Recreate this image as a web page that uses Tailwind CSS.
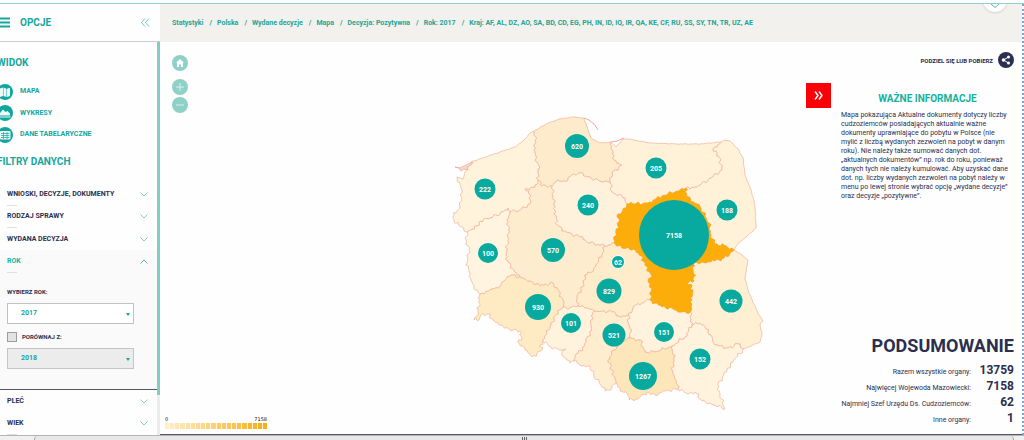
<!DOCTYPE html>
<html lang="pl">
  <head>
    <meta charset="UTF-8" />
    <meta name="viewport" content="width=device-width, initial-scale=1.0" />
    <title>Mapy migracyjne - statystyki</title>
    <script src="https://cdn.jsdelivr.net/npm/@tailwindcss/browser@4"></script>
  </head>
  <body class="h-screen flex flex-col overflow-hidden bg-[#fefefe] font-[Roboto,sans-serif] text-[#2b2f4e]">
    <div class="h-[4px] shrink-0 border-b border-[#8fd0cb]"></div>

    <div class="flex flex-1 min-h-0 border-r-2 border-dotted border-[#7fa3d6]">
      <!-- Sidebar -->
      <aside class="w-[160px] shrink-0 flex flex-col">
        <div class="h-[38px] shrink-0 flex items-center border-b border-[#c9cccc] pr-2.5 text-[#14a79d]">
          <button aria-label="Menu" class="w-[10px]">
            <svg class="w-[10px] h-[11px]" viewBox="0 0 10 11" stroke="currentColor" stroke-width="2">
              <path d="M0 1.5h10M0 5.5h10M0 9.5h10" />
            </svg>
          </button>
          <h1 class="ml-2.5 flex-1 text-[10px] font-bold">OPCJE</h1>
          <button aria-label="Zwiń">
            <svg class="w-[9px] h-[9px]" viewBox="0 0 9 9" fill="none" stroke="#4fbdb4" stroke-width="0.8">
              <path d="M4 .5l-3.500 4 3.500 4M8 .5l-3.500 4 3.500 4" />
            </svg>
          </button>
        </div>

        <div class="flex-1 min-h-0 flex justify-between">
          <div class="flex-1 flex flex-col overflow-hidden">
            <section class="pt-3.5 text-[#14a79d]">
              <h2 class="-ml-[3px] text-[10px] leading-[14px] font-bold">WIDOK</h2>
              <ul class="mt-[11px] text-[7px] font-bold">
                <li>
                  <a href="#mapa" class="h-[21px] flex items-center">
                    <svg class="w-[16px] h-[16px] -ml-[3px]" viewBox="0 0 16 16">
                      <circle cx="8" cy="8" r="8" fill="#0fa79d" />
                      <path d="M3 4.500l3-1v8.500l-3 1zM6.500 3.500l3 1.300v8.300l-3-1.200zM10 4.800l3-1v8.200l-3 1z" fill="#eefaf9" />
                    </svg>
                    <span class="ml-[7px]">MAPA</span>
                  </a>
                </li>
                <li>
                  <a href="#wykresy" class="h-[22px] flex items-center">
                    <svg class="w-[16px] h-[16px] -ml-[3px]" viewBox="0 0 16 16">
                      <circle cx="8" cy="8" r="8" fill="#0fa79d" />
                      <path d="M3 10.500V8l3-3.500 2.500 2.500 2-1 2.500 2.500v2zM3 11.500h10.500v1H3z" fill="#eefaf9" />
                    </svg>
                    <span class="ml-[7px]">WYKRESY</span>
                  </a>
                </li>
                <li>
                  <a href="#dane" class="h-[21px] flex items-center">
                    <svg class="w-[16px] h-[16px] -ml-[3px]" viewBox="0 0 16 16">
                      <circle cx="8" cy="8" r="8" fill="#0fa79d" />
                      <rect x="3" y="4" width="10.500" height="8.500" rx="1" fill="#eefaf9" />
                      <path d="M4 6.500h8.500M4 8.500h8.500M4 10.500h8.500M6.500 5v7M10 5v7" stroke="#0fa79d" stroke-width=".7" />
                    </svg>
                    <span class="ml-[7px]">DANE TABELARYCZNE</span>
                  </a>
                </li>
              </ul>
            </section>

            <section class="pt-2.5">
              <h2 class="-ml-[3px] text-[10px] leading-[14px] font-bold text-[#14a79d]">FILTRY DANYCH</h2>
              <div class="mt-[15px] text-[7px] font-bold">
                <button class="w-full h-[21px] pl-[7px] pr-[9px] flex items-center justify-between">
                  WNIOSKI, DECYZJE, DOKUMENTY
                  <svg class="w-[8px] h-[5px]" viewBox="0 0 8 5" fill="none" stroke="#8accc5"><path d="M.5 .5l3.500 3.500 3.500-3.500" /></svg>
                </button>
                <div class="w-[10px] h-px ml-[7px] bg-[#dfe1e1]"></div>
                <button class="w-full h-[21px] pl-[7px] pr-[9px] flex items-center justify-between">
                  RODZAJ SPRAWY
                  <svg class="w-[8px] h-[5px]" viewBox="0 0 8 5" fill="none" stroke="#8accc5"><path d="M.5 .5l3.500 3.500 3.500-3.500" /></svg>
                </button>
                <div class="w-[10px] h-px ml-[7px] bg-[#dfe1e1]"></div>
                <button class="w-full h-[22px] pl-[7px] pr-[9px] flex items-center justify-between">
                  WYDANA DECYZJA
                  <svg class="w-[8px] h-[5px]" viewBox="0 0 8 5" fill="none" stroke="#8accc5"><path d="M.5 .5l3.500 3.500 3.500-3.500" /></svg>
                </button>
              </div>
            </section>

            <section class="h-[140px] shrink-0 bg-[#fafafa] border-b border-[#55576b] text-[7px] font-bold">
              <button class="w-full h-[22px] pl-[7px] pr-[9px] flex items-center justify-between text-[#14b39f]">
                ROK
                <svg class="w-[8px] h-[5px]" viewBox="0 0 8 5" fill="none" stroke="#4fb9a9"><path d="M.5 4.500l3.500-3.500 3.500 3.500" /></svg>
              </button>
              <div class="w-[10px] h-px ml-[7px] bg-[#dfe1e1]"></div>
              <div class="pl-[7px] pt-3.5 w-[134px] text-[6px]">
                <label for="rok" class="block leading-[10px]">WYBIERZ ROK:</label>
                <div class="mt-1.5 relative">
                  <select id="rok" class="appearance-none block w-full h-[21px] pl-[13px] border border-[#bfc1c2] bg-white text-[7px] font-bold text-[#14a79d]">
                    <option>2017</option>
                  </select>
                  <svg class="absolute right-1 top-2.5 w-[4px] h-[3px]" viewBox="0 0 4 3"><path d="M0 0h4l-2 3z" fill="#14a79d" /></svg>
                </div>
                <div class="mt-2 flex items-center">
                  <input id="porownaj" type="checkbox" class="appearance-none w-[10px] h-[10px] border border-[#9a9c9e] bg-[#e2e3e3]" />
                  <label for="porownaj" class="ml-[5px] leading-[10px]">PORÓWNAJ Z:</label>
                </div>
                <div class="mt-1.5 relative">
                  <select aria-label="Porównaj z rokiem" class="appearance-none block w-full h-[21px] pl-[13px] border border-[#c4c6c6] bg-[#ececec] text-[7px] font-bold text-[#14a79d]">
                    <option>2018</option>
                  </select>
                  <svg class="absolute right-1 top-2.5 w-[4px] h-[3px]" viewBox="0 0 4 3"><path d="M0 0h4l-2 3z" fill="#14a79d" /></svg>
                </div>
              </div>
            </section>

            <section class="text-[7px] font-bold">
              <button class="w-full h-[22px] pl-[7px] pr-[9px] flex items-center justify-between">
                PŁEĆ
                <svg class="w-[8px] h-[5px]" viewBox="0 0 8 5" fill="none" stroke="#8accc5"><path d="M.5 .5l3.500 3.500 3.500-3.500" /></svg>
              </button>
              <button class="w-full h-[22px] pl-[7px] pr-[9px] flex items-center justify-between">
                WIEK
                <svg class="w-[8px] h-[5px]" viewBox="0 0 8 5" fill="none" stroke="#8accc5"><path d="M.5 .5l3.500 3.500 3.500-3.500" /></svg>
              </button>
              <div class="w-[10px] h-px ml-[7px] bg-[#dfe1e1]"></div>
            </section>
          </div>
          <div class="w-[3px] bg-[#ececec]"><div class="h-[353px] bg-[#7fcdc3]"></div></div>
        </div>
      </aside>

      <!-- Map and summary -->
      <main class="flex-1 min-w-0 flex flex-col border-b border-[#55576b]">
        <header class="relative h-[38px] shrink-0 px-3 flex items-center bg-[#f2f1ed] overflow-hidden">
          <nav class="text-[7px] font-bold text-[#22a596] whitespace-nowrap flex gap-[5px]">
            <a href="#">Statystyki</a><span class="pl-px">/</span>
            <a href="#">Polska</a><span class="pl-px">/</span>
            <a href="#">Wydane decyzje</a><span class="pl-px">/</span>
            <a href="#">Mapa</a><span class="pl-px">/</span>
            <a href="#">Decyzja: Pozytywna</a><span class="pl-px">/</span>
            <a href="#">Rok: 2017</a><span class="pl-px">/</span>
            <a href="#">Kraj: AF, AL, DZ, AO, SA, BD, CD, EG, PH, IN, ID, IQ, IR, QA, KE, CF, RU, SS, SY, TN, TR, UZ, AE</a>
          </nav>
          <button aria-label="Rozwiń" class="absolute right-[15px] -top-4 w-[24px] h-[24px] rounded-full bg-white shadow flex items-end justify-center">
            <svg class="w-[8px] h-[8px]" viewBox="0 0 8 8" fill="none" stroke="#4fbdb4"><path d="M0 0l4 3.500L8 0" /></svg>
          </button>
        </header>

        <div class="flex-1 min-h-0 flex">
          <div class="w-[120px] shrink-0 pl-3 pt-[13px] pb-[5px] flex flex-col">
            <button aria-label="Cała mapa" class="w-[16px] h-[16px]">
              <svg viewBox="0 0 16 16"><circle cx="8" cy="8" r="8" fill="#8fd0c8" /><path d="M8 4l4 3.800h-1V12H9V9.500H7V12H5V7.800H4z" fill="#fff" /></svg>
            </button>
            <button aria-label="Przybliż" class="mt-2 w-[16px] h-[16px]">
              <svg viewBox="0 0 16 16"><circle cx="8" cy="8" r="8" fill="#8fd0c8" /><path d="M8 4v8M4 8h8" stroke="#d9f0ed" /></svg>
            </button>
            <button aria-label="Oddal" class="mt-[2px] w-[16px] h-[16px]">
              <svg viewBox="0 0 16 16"><circle cx="8" cy="8" r="8" fill="#8fd0c8" /><path d="M4 8h8" stroke="#d9f0ed" /></svg>
            </button>
            <div class="mt-auto -ml-[7px] w-[102px] text-[5px] text-[#111]">
              <div class="flex justify-between leading-[8px] font-[DejaVu_Sans,sans-serif]"><span>0</span><span>7158</span></div>
              <div id="scale" class="h-[6px] flex gap-px bg-[#fff6e2]"></div>
            </div>
          </div>

          <div class="flex-1 min-w-0 flex justify-center pt-[70px]">
            <svg id="map" class="w-[320px] h-[306px] shrink-0 ml-[134px]" viewBox="450 112 320 306" role="img" aria-label="Mapa Polski"></svg>
          </div>

          <div class="w-[216px] shrink-0 pt-2.5 pb-2 pr-2 flex flex-col">
            <button class="self-end flex items-center gap-[5px] text-[6px] font-bold">
              PODZIEL SIĘ LUB POBIERZ
              <svg class="w-[16px] h-[16px]" viewBox="0 0 16 16">
                <circle cx="8" cy="8" r="8" fill="#2b2f52" />
                <path d="M10.500 5L5.500 8l5 3" fill="none" stroke="#fff" />
                <g fill="#fff"><circle cx="10.500" cy="5" r="1.500" /><circle cx="5.500" cy="8" r="1.800" /><circle cx="10.500" cy="11" r="1.500" /></g>
              </svg>
            </button>
            <div class="mt-[15px] flex gap-[10px]">
              <button aria-label="Ukryj informacje" class="w-[25px] h-[25px] shrink-0 bg-[#fb0007] flex items-center justify-center">
                <svg class="w-[9px] h-[9px]" viewBox="0 0 9 9" fill="none" stroke="#fff" stroke-width="1.500"><path d="M1 .5l3 4-3 4M5 .5l3 4-3 4" /></svg>
              </button>
              <div class="flex-1 min-w-0 pt-[9px]">
                <h2 class="text-center text-[10px] leading-[14px] font-bold text-[#14b1a0]">WAŻNE INFORMACJE</h2>
                <p class="mt-[5px] text-[7px] leading-[9px] whitespace-nowrap">
                  Mapa pokazująca Aktualne dokumenty dotyczy liczby<br />
                  cudzoziemców posiadających aktualnie ważne<br />
                  dokumenty uprawniające do pobytu w Polsce (nie<br />
                  mylić z liczbą wydanych zezwoleń na pobyt w danym<br />
                  roku). Nie należy także sumować danych dot.<br />
                  „aktualnych dokumentów” np. rok do roku, ponieważ<br />
                  danych tych nie należy kumulować. Aby uzyskać dane<br />
                  dot. np. liczby wydanych zezwoleń na pobyt należy w<br />
                  menu po lewej stronie wybrać opcję „wydane decyzje”<br />
                  oraz decyzje „pozytywne”.
                </p>
              </div>
            </div>
            <div class="mt-auto text-right">
              <h2 class="text-[18px] leading-[24px] font-bold">PODSUMOWANIE</h2>
              <dl class="mt-1 grid grid-cols-[1fr_43px] auto-rows-[16px] items-baseline text-[7px] whitespace-nowrap">
                <dt>Razem wszystkie organy:</dt><dd class="text-[12px] leading-[16px] font-bold">13759</dd>
                <dt>Najwięcej Wojewoda Mazowiecki:</dt><dd class="text-[12px] leading-[16px] font-bold">7158</dd>
                <dt>Najmniej Szef Urzędu Ds. Cudzoziemców:</dt><dd class="text-[12px] leading-[16px] font-bold">62</dd>
                <dt>Inne organy:</dt><dd class="text-[12px] leading-[16px] font-bold">1</dd>
              </dl>
            </div>
          </div>
        </div>
      </main>
    </div>

    <!-- Horizontal scrollbar -->
    <div class="h-[5px] shrink-0 flex bg-[#f0f0f0] border-t border-[#b5b5b5]">
      <div class="w-[34px]"></div>
      <div class="flex-1 mr-[10px] rounded-t-sm border-x border-[#a5a5a5] bg-[#e8e8e8] flex items-center justify-center gap-px">
        <i class="w-px h-[3px] bg-[#666]"></i><i class="w-px h-[3px] bg-[#666]"></i><i class="w-px h-[3px] bg-[#666]"></i>
      </div>
    </div>

    <script>
      // Borders shared by two regions are listed once; "-" in front of a name walks it backwards
      const borders = {
        // coast and state border
        zpCoast: "457,177 463,179 465,172 471,162 500,152 515,147 524,140 530,133 534,131",
        pmCoast: "534,131 548,123 560,119 573,117 584,118 588,130 591,138 600,143 611,142",
        wmCoast: "611,142 616,147 623,139 628,139 650,143 677,144 700,144 721,142",
        pdEast: "721,142 724,140 730,141 738,149 743,158 745,175 751,190 755,205 756,228 747,236 738,244 734,250",
        luEast: "734,250 742,255 748,260 745,278 749,293 758,313 763,321 760,324 762,335 760,342 744,349",
        pkSouth: "744,349 735,359 727,370 718,385 720,395 725,409 710,403 702,401 695,392 688,394 678,389",
        maSouth: "678,389 665,391 655,395 647,392 640,397 635,400 629,400 627,393 620,391 616,381",
        slSouth: "616,381 612,388 605,391 599,382 594,376 590,366 582,366 574,361",
        opSouth: "574,361 570,363 564,357 562,353 566,349 560,350 551,347 546,342 543,342",
        dsSouth: "543,342 540,345 542,350 532,357 525,350 518,342 522,338 520,331 510,330 502,325 494,321 488,314 481,315 479,320 474,320 478,312 480,294",
        lbWest: "480,294 475,290 472,282 469,272 467,263 469,250 466,240 467,232",
        zpWest: "467,232 462,227 454,222 453,217 460,206 462,197 461,187 457,177",
        // inner borders
        zpPm: "534,131 536,142 534,150 537,162 540,168 538,173 538,180",
        zpWp: "538,180 535,187 525,189 531,196 530,204 520,210 510,212",
        zpLb: "510,212 508,208 500,214 490,218 480,221 477,226 467,232",
        pmWp: "538,180 542,186 552,186",
        pmKp: "552,186 556,182 568,180 572,175 580,173 588,177 602,182 610,182",
        pmWm: "610,182 612,173 622,165 614,160 612,150 611,142",
        wmKp: "610,182 612,192 625,198 627,204",
        wmMz: "627,204 633,204 648,203 662,196 680,190 686,188",
        wmPd: "686,188 697,187 711,178 722,170 720,158 713,149 721,142",
        pdMz: "686,188 687,197 700,207 709,223 711,235 715,244 726,246 734,250",
        luMz: "734,250 724,258 715,261 703,262 693,264 694,281 687,283 692,285 692,300 690,312",
        skMz: "690,312 680,312 672,308 662,307 650,300",
        ldMz: "650,300 652,288 648,282 652,276 645,265 642,256 634,249 622,248 614,243",
        kpMz: "614,243 616,231 619,222 617,216 622,212 627,204",
        kpLd: "614,243 608,245 605,246",
        kpWp: "605,246 590,243 580,237 566,232 557,225 555,210 554,205 552,186",
        wpLd: "605,246 602,255 596,265 592,272 585,275 584,285 577,296 578,306",
        lbWp: "510,212 508,222 509,233 506,255 508,262 514,270 520,277",
        lbDs: "480,294 490,290 500,286 505,280 511,275 520,277",
        wpDs: "520,277 530,281 540,286 553,283 558,290 564,303 563,307",
        wpOp: "563,307 570,308 578,306",
        dsOp: "563,307 556,315 551,325 546,335 543,342",
        opLd: "578,306 586,308 594,311",
        opSl: "594,311 591,320 592,330 586,340 583,350 576,354 574,361",
        slLd: "594,311 602,311 612,312 620,317 629,316",
        ldSk: "629,316 633,308 636,305 650,300",
        slSk: "629,316 628,322 632,330 628,338",
        slMa: "628,338 620,343 614,350 608,360 612,370 616,381",
        skMa: "628,338 640,340 645,352 655,352 672,346",
        skPk: "672,346 685,337 692,325",
        skLu: "690,312 692,325",
        maPk: "672,346 674,360 672,370 676,380 678,389",
        luPk: "692,325 700,323 706,329 712,337 715,345 728,348 738,344 744,349",
      };

      const regions = [
        { value: 222, x: 485, y: 189, r: 10.5, fill: "#fff3db", path: "zpCoast zpPm zpWp zpLb zpWest" },
        { value: 620, x: 577, y: 146, r: 12, fill: "#feebcb", path: "pmCoast -pmWm -pmKp -pmWp -zpPm" },
        { value: 205, x: 656, y: 168, r: 10.5, fill: "#fff2d9", path: "wmCoast -wmPd -wmMz -wmKp pmWm" },
        { value: 188, x: 727, y: 210, r: 10.5, fill: "#fff2d9", path: "pdEast -pdMz wmPd" },
        { value: 240, x: 588, y: 205, r: 10.5, fill: "#fff2dc", path: "pmKp wmKp -kpMz kpLd kpWp" },
        { value: 100, x: 488, y: 253, r: 10, fill: "#fff4e0", path: "-zpLb lbWp -lbDs lbWest" },
        { value: 570, x: 553, y: 250, r: 12, fill: "#feeccf", path: "-zpWp pmWp -kpWp wpLd -wpOp -wpDs -lbWp" },
        { value: 829, x: 609, y: 291, r: 12.5, fill: "#feeccb", path: "-kpLd -ldMz -ldSk -slLd -opLd -wpLd" },
        { value: 62, x: 618, y: 262, r: 6.5, fill: null },
        { value: 930, x: 538, y: 307, r: 13, fill: "#feeac3", path: "lbDs wpDs dsOp dsSouth" },
        { value: 101, x: 571, y: 323, r: 10, fill: "#fff3de", path: "wpOp opLd opSl opSouth -dsOp" },
        { value: 521, x: 614, y: 335, r: 11.5, fill: "#ffedd0", path: "slLd slSk slMa slSouth -opSl" },
        { value: 151, x: 664, y: 332, r: 10, fill: "#fff3de", path: "ldSk -skMz skLu -skPk -skMa -slSk" },
        { value: 442, x: 731, y: 301, r: 11.5, fill: "#ffefd3", path: "luEast -luPk -skLu -luMz" },
        { value: 152, x: 700, y: 359, r: 10.5, fill: "#fff3de", path: "luPk pkSouth -maPk skPk" },
        { value: 1267, x: 643, y: 376, r: 14, fill: "#fee6bb", path: "skMa maPk maSouth -slMa" },
        { value: 7158, x: 674, y: 235, r: 35, fill: "#fdad0a", path: "wmMz pdMz luMz skMz ldMz kpMz" },
      ];

      // Breaks straight runs into short steps that wander a little, as rivers and county lines do
      function roughen(name) {
        const points = borders[name].split(" ").map((p) => p.split(",").map(Number));
        const size = /Coast|East/.test(name) ? 0.2 : 0.9;
        const out = [points[0]];
        for (let i = 1; i < points.length; i++) {
          const [x1, y1] = points[i - 1];
          const [x2, y2] = points[i];
          const length = Math.hypot(x2 - x1, y2 - y1);
          const steps = Math.max(1, Math.round(length / 2));
          for (let s = 1; s < steps; s++) {
            const t = s / steps;
            const d = (Math.sin(s * 2.3 + x1 * 1.7 + y1) + Math.sin(s * 5.1 + y1 * 2.9)) * size;
            out.push([x1 + (x2 - x1) * t - ((y2 - y1) / length) * d, y1 + (y2 - y1) * t + ((x2 - x1) / length) * d]);
          }
          out.push([x2, y2]);
        }
        return out;
      }

      const lines = {};
      Object.keys(borders).forEach((name) => (lines[name] = roughen(name)));

      const shapes = regions
        .filter((region) => region.path)
        .map((region) => {
          const points = region.path
            .split(" ")
            .flatMap((name) => (name[0] === "-" ? [...lines[name.slice(1)]].reverse() : lines[name]));
          const stroke = region.value === 7158 ? "#f6a81c" : "#f1b99e";
          return `<path d="M${points.map((p) => p.map((n) => n.toFixed(1)).join(" ")).join("L")}Z" fill="${region.fill}" stroke="${stroke}" stroke-width="0.8" stroke-linejoin="round" />`;
        });

      // Hel, the Vistula Spit and Świnoujście
      const spits = `
        <path d="M584 118l5 2 6 5 3 5M611 142l6-1 7-3" fill="none" stroke="#f0aa9c" />
        <path d="M455 167l5 1 4-2 6-3 3-1-2 3-4 2 1 3-4-1-3 2-2-3z" fill="#fbd9cf" stroke="#f0aa9c" stroke-width="0.8" />`;

      const bubbles = regions.map(
        (region) => `
          <circle cx="${region.x}" cy="${region.y}" r="${region.r}" fill="#08a99e" ${region.value === 62 ? 'stroke="#fff" stroke-width="1"' : ""} />
          <text x="${region.x}" y="${region.y + 3}" text-anchor="middle" class="text-[7px] font-bold fill-white">${region.value}</text>`
      );

      document.getElementById("map").innerHTML = shapes.join("") + spits + bubbles.join("");

      const scale = document.getElementById("scale");
      for (let i = 0; i < 20; i++) {
        const step = document.createElement("i");
        step.className = "flex-1 bg-[#f6ae12]";
        step.style.opacity = 0.1 + i * 0.047;
        scale.appendChild(step);
      }
    </script>
  </body>
</html>
